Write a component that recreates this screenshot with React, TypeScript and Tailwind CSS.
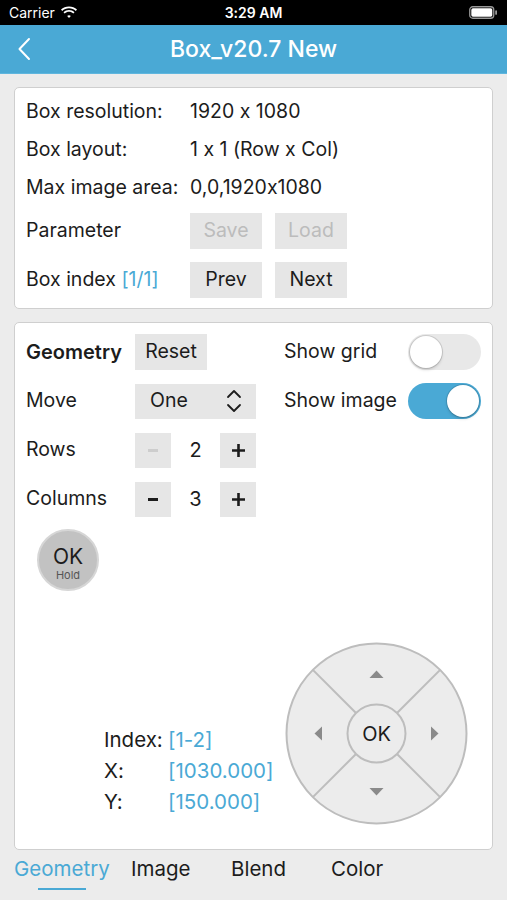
import React from 'react';

const Wifi = () => (
  <svg width="18" height="13" viewBox="0 0 18 13" fill="white">
    <path d="M9 2.2c2.6 0 5 1 6.8 2.7l1.2-1.3C14.9 1.6 12.1.4 9 .4S3.1 1.6 1 3.6l1.2 1.3C4 3.2 6.4 2.2 9 2.2z" />
    <path d="M9 5.8c1.6 0 3.1.6 4.3 1.7l1.2-1.3C13 4.8 11.1 4 9 4s-4 .8-5.5 2.2l1.2 1.3C5.9 6.4 7.4 5.8 9 5.8z" />
    <path d="M9 9.3c.7 0 1.3.3 1.8.7L9 12 7.2 10c.5-.4 1.1-.7 1.8-.7z" />
  </svg>
);

const Battery = () => (
  <svg width="29" height="13" viewBox="0 0 29 13">
    <rect x="0.75" y="0.75" width="24" height="11.5" rx="3" fill="none" stroke="white" strokeWidth="1.3" opacity="0.6" />
    <rect x="2.3" y="2.3" width="21" height="8.4" rx="1.6" fill="white" />
    <rect x="26.2" y="4.2" width="1.8" height="4.6" rx="0.9" fill="white" opacity="0.6" />
  </svg>
);

const Toggle: React.FC<{ on?: boolean }> = ({ on }) => (
  <div
    className={`w-[73px] h-[36px] rounded-full p-[2px] flex ${on ? 'bg-[#4aa9d5] justify-end' : 'bg-[#e8e8e8] justify-start'}`}
  >
    <div className="w-[32px] h-[32px] rounded-full bg-white shadow-[0_0_0_1px_rgba(0,0,0,0.12),0_2px_3px_rgba(0,0,0,0.15)]" />
  </div>
);

const Stepper: React.FC<{ value: number; minusDisabled?: boolean }> = ({ value, minusDisabled }) => (
  <div className="flex w-[121px] h-[35px] bg-[#e6e6e6]">
    <div className="w-[36px] flex items-center justify-center">
      <div className={`w-[10px] h-[3px] ${minusDisabled ? 'bg-[#cdcdcd]' : 'bg-[#1c1c1c]'}`} />
    </div>
    <div className="w-[49px] bg-white flex items-center justify-center text-[20px] text-[#1c1c1c]">{value}</div>
    <div className="w-[36px] flex items-center justify-center">
      <svg width="15" height="15" viewBox="0 0 15 15">
        <path d="M7.5 1v13M1 7.5h13" stroke="#1c1c1c" strokeWidth="2.6" />
      </svg>
    </div>
  </div>
);

const GrayBtn: React.FC<{ label: string; disabled?: boolean }> = ({ label, disabled }) => (
  <div
    className={`w-[72px] h-[36px] bg-[#e6e6e6] flex items-center justify-center text-[19.5px] ${disabled ? 'text-[#bcbcbc]' : 'text-[#1c1c1c]'}`}
  >
    {label}
  </div>
);

const DPad = () => (
  <svg width="183" height="183" viewBox="0 0 183 183">
    <circle cx="91.5" cy="91.5" r="90" fill="#ececec" stroke="#bdbdbd" strokeWidth="2" />
    {[45, 135, 225, 315].map((a) => {
      const r = (a * Math.PI) / 180;
      return (
        <line
          key={a}
          x1={91.5 + Math.cos(r) * 29}
          y1={91.5 + Math.sin(r) * 29}
          x2={91.5 + Math.cos(r) * 90}
          y2={91.5 + Math.sin(r) * 90}
          stroke="#bdbdbd"
          strokeWidth="2"
        />
      );
    })}
    <circle cx="91.5" cy="91.5" r="29" fill="#ececec" stroke="#bdbdbd" strokeWidth="2" />
    <path d="M84.5 36 L98.5 36 L91.5 28.5 Z" fill="#8a8a8a" />
    <path d="M84.5 146 L98.5 146 L91.5 153.5 Z" fill="#8a8a8a" />
    <path d="M37 84.5 L37 98.5 L29.5 91.5 Z" fill="#8a8a8a" />
    <path d="M146 84.5 L146 98.5 L153.5 91.5 Z" fill="#8a8a8a" />
    <text x="91.5" y="98.5" textAnchor="middle" fontSize="20" fill="#1c1c1c" fontFamily="Inter, sans-serif">
      OK
    </text>
  </svg>
);

export default function App() {
  return (
    <div
      className="w-[507px] h-[900px] bg-[#ececec] flex flex-col text-[#1c1c1c] [font-feature-settings:'calt'_0]"
      style={{ fontFamily: 'Inter, "Noto Sans", sans-serif' }}
    >
      {/* status bar */}
      <div className="h-[25px] bg-black flex items-center px-[9px] text-white text-[14px] relative">
        <div className="flex items-center gap-[5px]">
          <span>Carrier</span>
          <Wifi />
        </div>
        <div className="absolute left-0 right-0 text-center font-semibold pointer-events-none">3:29 AM</div>
        <div className="ml-auto">
          <Battery />
        </div>
      </div>

      {/* nav bar */}
      <div className="h-[49px] bg-[#4aa9d5] flex items-center relative border-b border-[#5fb6de]">
        <svg className="ml-[17px]" width="14" height="24" viewBox="0 0 14 24">
          <path d="M12 2 L2.5 12 L12 22" fill="none" stroke="white" strokeWidth="2" strokeLinecap="round" strokeLinejoin="round" />
        </svg>
        <div className="absolute inset-0 flex items-center justify-center text-white text-[23px] font-medium">Box_v20.7 New</div>
      </div>

      {/* card 1 */}
      <div className="mx-[14px] mt-[13px] bg-white border border-[#cfcfcf] rounded-[5px] pl-[11px] pt-[5px] pb-[10px] text-[19.5px]">
        <div className="flex items-center h-[38px]">
          <div className="w-[164px]">Box resolution:</div>
          <div>1920 x 1080</div>
        </div>
        <div className="flex items-center h-[38px]">
          <div className="w-[164px]">Box layout:</div>
          <div>1 x 1 (Row x Col)</div>
        </div>
        <div className="flex items-center h-[38px]">
          <div className="w-[164px]">Max image area:</div>
          <div>0,0,1920x1080</div>
        </div>
        <div className="flex items-center h-[36px] mt-[6px]">
          <div className="w-[164px]">Parameter</div>
          <div className="flex gap-[13px]">
            <GrayBtn label="Save" disabled />
            <GrayBtn label="Load" disabled />
          </div>
        </div>
        <div className="flex items-center h-[36px] mt-[13px]">
          <div className="w-[164px]">
            Box index <span className="text-[#4aa9d5]">[1/1]</span>
          </div>
          <div className="flex gap-[13px]">
            <GrayBtn label="Prev" />
            <GrayBtn label="Next" />
          </div>
        </div>
      </div>

      {/* card 2 */}
      <div className="mx-[14px] mt-[13px] h-[528px] bg-white border border-[#cfcfcf] rounded-[5px] pl-[11px] pr-[11px] pt-[11px] pb-[24px] text-[19.5px] flex flex-col">
        <div className="flex items-center h-[36px]">
          <div className="w-[109px] text-[20px] font-semibold">Geometry</div>
          <div className="w-[121px]">
            <GrayBtn label="Reset" />
          </div>
          <div className="ml-[28px]">Show grid</div>
          <div className="ml-auto">
            <Toggle />
          </div>
        </div>
        <div className="flex items-center h-[36px] mt-[13px]">
          <div className="w-[109px]">Move</div>
          <div className="w-[121px] h-[35px] bg-[#e6e6e6] flex items-center pl-[15px] pr-[14px]">
            <span>One</span>
            <svg className="ml-auto" width="16" height="26" viewBox="0 0 16 26">
              <path d="M2 9 L8 3 L14 9 M2 17 L8 23 L14 17" fill="none" stroke="#1c1c1c" strokeWidth="1.8" strokeLinecap="round" strokeLinejoin="round" />
            </svg>
          </div>
          <div className="ml-[28px]">Show image</div>
          <div className="ml-auto">
            <Toggle on />
          </div>
        </div>
        <div className="flex items-center h-[36px] mt-[13px]">
          <div className="w-[109px]">Rows</div>
          <Stepper value={2} minusDisabled />
        </div>
        <div className="flex items-center h-[36px] mt-[13px]">
          <div className="w-[109px]">Columns</div>
          <Stepper value={3} />
        </div>
        <div className="mt-[12px] ml-[11px] w-[62px] h-[62px] rounded-full bg-[#c2c2c2] border-2 border-[#d6d6d6] flex flex-col items-center justify-center">
          <div className="text-[21px] leading-[25px] mt-[6px]">OK</div>
          <div className="text-[11px] leading-[13px] text-[#555]">Hold</div>
        </div>

        <div className="mt-auto flex items-end">
          <div className="ml-[78px] mb-[8px] text-[20.5px] leading-[31px]">
            <div className="flex">
              <span className="w-[64px]">Index:</span>
              <span className="text-[#4aa9d5]">[1-2]</span>
            </div>
            <div className="flex">
              <span className="w-[64px]">X:</span>
              <span className="text-[#4aa9d5]">[1030.000]</span>
            </div>
            <div className="flex">
              <span className="w-[64px]">Y:</span>
              <span className="text-[#4aa9d5]">[150.000]</span>
            </div>
          </div>
          <div className="ml-auto mr-[13px]">
            <DPad />
          </div>
        </div>
      </div>

      {/* tabs */}
      <div className="flex text-[20.5px] ml-[14px] mt-[4px]">
        <div className="w-[117px] flex flex-col">
          <span className="text-[#4aa9d5]">Geometry</span>
          <div className="mt-[3px] ml-[24px] w-[48px] h-[2px] bg-[#4aa9d5]" />
        </div>
        <span className="w-[100px]">Image</span>
        <span className="w-[100px]">Blend</span>
        <span>Color</span>
      </div>
    </div>
  );
}
